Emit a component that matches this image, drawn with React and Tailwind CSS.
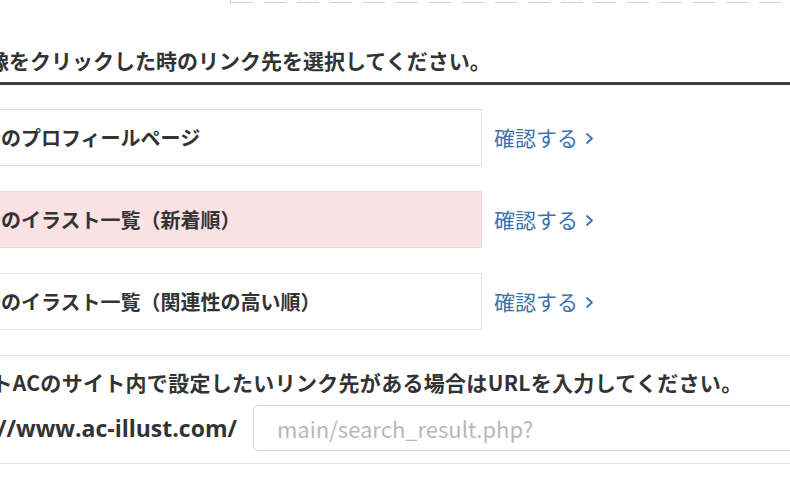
import React from 'react';

const FONT = { fontFamily: '"Noto Sans CJK JP", "Noto Sans", sans-serif' };
const LATIN = { fontFamily: '"Open Sans", "Noto Sans CJK JP", sans-serif' };

const options = [
    { label: '作者のプロフィールページ', active: false },
    { label: '作者のイラスト一覧（新着順）', active: true },
    { label: '作者のイラスト一覧（関連性の高い順）', active: false },
];

function LinkOption({ label, active }) {
    return (
        <div className="flex items-center">
            <div
                className={
                    'w-[562px] h-[57px] shrink-0 flex items-center pl-[40px] border text-[20px] font-bold text-[#333] whitespace-nowrap ' +
                    (active ? 'bg-[#f9e1e4] border-[#f3d3d8]' : 'bg-white border-[#e2e2e2]')
                }
            >
                {label}
            </div>
            <a href="#" className="ml-[12px] text-[21px] text-[#3a72b0] whitespace-nowrap flex items-center">
                確認する
                <svg className="ml-[7px] mt-[2px]" width="9" height="13" viewBox="0 0 9 13" fill="none">
                    <path d="M2 2 L7 6.5 L2 11" stroke="#3a72b0" strokeWidth="1.8" strokeLinecap="round" strokeLinejoin="round" />
                </svg>
            </a>
        </div>
    );
}

export default function App() {
    return (
        <div className="w-[790px] h-[480px] overflow-hidden bg-white" style={FONT}>
            <div className="-ml-[80px] w-[870px]">
                {/* bottom edge of the dashed upload box above */}
                <div className="ml-[310px] h-[3px] border-l border-[#cfcfcf] flex items-end">
                    <div className="w-full h-[1px] bg-[repeating-linear-gradient(to_right,#cfcfcf_0,#cfcfcf_22px,transparent_22px,transparent_33px)]" />
                </div>

                <div className="mt-[42px] pl-[47px] pb-[7px] border-b-[3px] border-[#3b3f46]">
                    <h2 className="text-[21px] leading-[30px] font-bold text-[#333] whitespace-nowrap">
                        画像をクリックした時のリンク先を選択してください。
                    </h2>
                </div>

                <div className="mt-[24px] flex flex-col gap-[25px]">
                    {options.map((o) => (
                        <LinkOption key={o.label} {...o} />
                    ))}
                </div>

                <div className="mt-[25px] border-t border-b border-[#e3e3e3] pt-[11px] pb-[12px]">
                    <p className="pl-[8px] text-[21px] leading-[30px] font-bold tracking-[0.3px] text-[#333] whitespace-nowrap">
                        イラストACのサイト内で設定したいリンク先がある場合はURLを入力してください。
                    </p>
                    <div className="mt-[8px] flex items-center">
                        <div
                            className="w-[317px] shrink-0 flex justify-end text-[23px] font-bold text-[#333] whitespace-nowrap"
                            style={LATIN}
                        >
                            https://www.ac-illust.com/
                        </div>
                        <input
                            type="text"
                            placeholder="main/search_result.php?"
                            className="ml-[16px] w-[600px] h-[46px] shrink-0 border border-[#d9d9d9] rounded-[5px] pl-[23px] text-[22px] text-[#333] placeholder:text-[#b8b8b8] outline-none"
                            style={FONT}
                        />
                    </div>
                </div>
            </div>
        </div>
    );
}
